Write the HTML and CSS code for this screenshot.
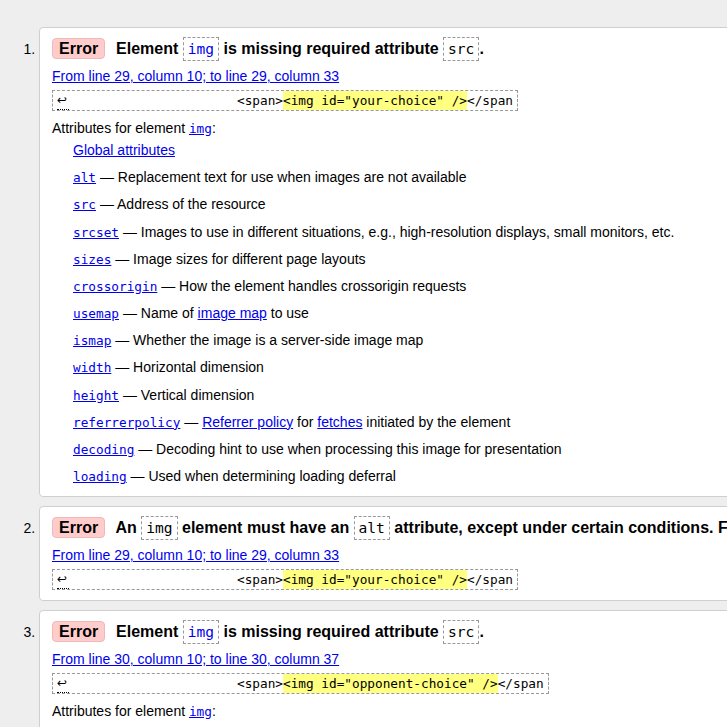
FILE: index.html
```html
<!DOCTYPE html>
<html lang="en">
<head>
<meta charset="utf-8">
<title>Nu Html Checker results</title>
<link rel="stylesheet" href="styles.css">
</head>
<body>
<ol class="results">
  <li class="error">
    <p class="msg"><span class="badge">Error</span> Element <a href="#"><code class="tok">img</code></a> is missing required attribute <code class="tok">src</code>.</p>
    <p class="location"><a href="#">From line 29, column 10; to line 29, column 33</a></p>
    <code class="extract"><span class="lf" title="Line break">↩</span><span class="src">&lt;span&gt;<mark>&lt;img id="your-choice" /&gt;</mark>&lt;/span</span></code>
    <dl class="attrs">
      <dt>Attributes for element <a href="#"><code>img</code></a>:</dt>
      <dd class="global"><a href="#">Global attributes</a></dd>
      <dd><a href="#"><code>alt</code></a> — Replacement text for use when images are not available</dd>
      <dd><a href="#"><code>src</code></a> — Address of the resource</dd>
      <dd><a href="#"><code>srcset</code></a> — Images to use in different situations, e.g., high-resolution displays, small monitors, etc.</dd>
      <dd><a href="#"><code>sizes</code></a> — Image sizes for different page layouts</dd>
      <dd><a href="#"><code>crossorigin</code></a> — How the element handles crossorigin requests</dd>
      <dd><a href="#"><code>usemap</code></a> — Name of <a href="#">image map</a> to use</dd>
      <dd><a href="#"><code>ismap</code></a> — Whether the image is a server-side image map</dd>
      <dd><a href="#"><code>width</code></a> — Horizontal dimension</dd>
      <dd><a href="#"><code>height</code></a> — Vertical dimension</dd>
      <dd><a href="#"><code>referrerpolicy</code></a> — <a href="#">Referrer policy</a> for <a href="#">fetches</a> initiated by the element</dd>
      <dd><a href="#"><code>decoding</code></a> — Decoding hint to use when processing this image for presentation</dd>
      <dd><a href="#"><code>loading</code></a> — Used when determining loading deferral</dd>
    </dl>
  </li>
  <li class="error">
    <p class="msg"><span class="badge">Error</span> An <code class="tok">img</code> element must have an <code class="tok">alt</code> attribute, except under certain conditions. For details, consult guidance on providing text alternatives for images.</p>
    <p class="location"><a href="#">From line 29, column 10; to line 29, column 33</a></p>
    <code class="extract"><span class="lf" title="Line break">↩</span><span class="src">&lt;span&gt;<mark>&lt;img id="your-choice" /&gt;</mark>&lt;/span</span></code>
  </li>
  <li class="error">
    <p class="msg"><span class="badge">Error</span> Element <a href="#"><code class="tok">img</code></a> is missing required attribute <code class="tok">src</code>.</p>
    <p class="location"><a href="#">From line 30, column 10; to line 30, column 37</a></p>
    <code class="extract"><span class="lf" title="Line break">↩</span><span class="src">&lt;span&gt;<mark>&lt;img id="opponent-choice" /&gt;</mark>&lt;/span</span></code>
    <dl class="attrs">
      <dt>Attributes for element <a href="#"><code>img</code></a>:</dt>
      <dd class="global"><a href="#">Global attributes</a></dd>
      <dd><a href="#"><code>alt</code></a> — Replacement text for use when images are not available</dd>
      <dd><a href="#"><code>src</code></a> — Address of the resource</dd>
      <dd><a href="#"><code>srcset</code></a> — Images to use in different situations, e.g., high-resolution displays, small monitors, etc.</dd>
    </dl>
  </li>
</ol>
</body>
</html>
```

FILE: styles.css
```css
html, body {
  overflow: hidden;
}

body {
  margin: 0;
  background: #eeeeee;
  color: #000;
  font-family: "Liberation Sans", Arial, sans-serif;
  font-size: 14px;
}

a {
  color: #0000ee;
}

code {
  font-family: "DejaVu Sans Mono", "Liberation Mono", monospace;
  font-size: 0.91em;
}

.results {
  margin: 0;
  padding: 27px 0 0 39px;
  width: 1600px;
}

.results > li {
  background: #fff;
  border: 1px solid #cfcfcf;
  border-radius: 4px;
  padding: 9px 12px 10px 12px;
  margin-bottom: 9px;
}

.msg {
  margin: 0;
  font-size: 16px;
  font-weight: bold;
  line-height: 23px;
}

.badge {
  display: inline-block;
  line-height: 19px;
  padding: 0 6px;
  margin-right: 6.5px;
  background: #ffcccc;
  border: 1px solid #efb9b9;
  border-radius: 4px;
}

.tok {
  display: inline-block;
  line-height: 18px;
  padding: 2px 4px;
  border: 1px dashed #999;
  font-weight: normal;
}

.location {
  margin: 5px 0 0 0;
  line-height: 20px;
}

.extract {
  display: block;
  width: fit-content;
  margin-top: 4px;
  border: 1px dashed #999;
  padding: 0 4px;
  line-height: 19px;
  white-space: pre;
  font-size: 12.74px;
}

.lf {
  display: inline-block;
  width: 12px;
  line-height: 18px;
  border-bottom: 1px dotted #000;
  font-family: "DejaVu Sans", sans-serif;
  font-size: 12px;
  vertical-align: top;
}

.src {
  margin-left: 168px;
}

mark {
  display: inline-block;
  background: #ffff80;
  color: inherit;
}

.attrs {
  margin: 7px 0 0 0;
  line-height: 20px;
}

.attrs code {
  line-height: 0;
}

.attrs dt {
  margin: 0;
}

.attrs dd {
  margin: 7.18px 0 0 21px;
}

.attrs dd.global {
  margin-top: 2px;
}
```
